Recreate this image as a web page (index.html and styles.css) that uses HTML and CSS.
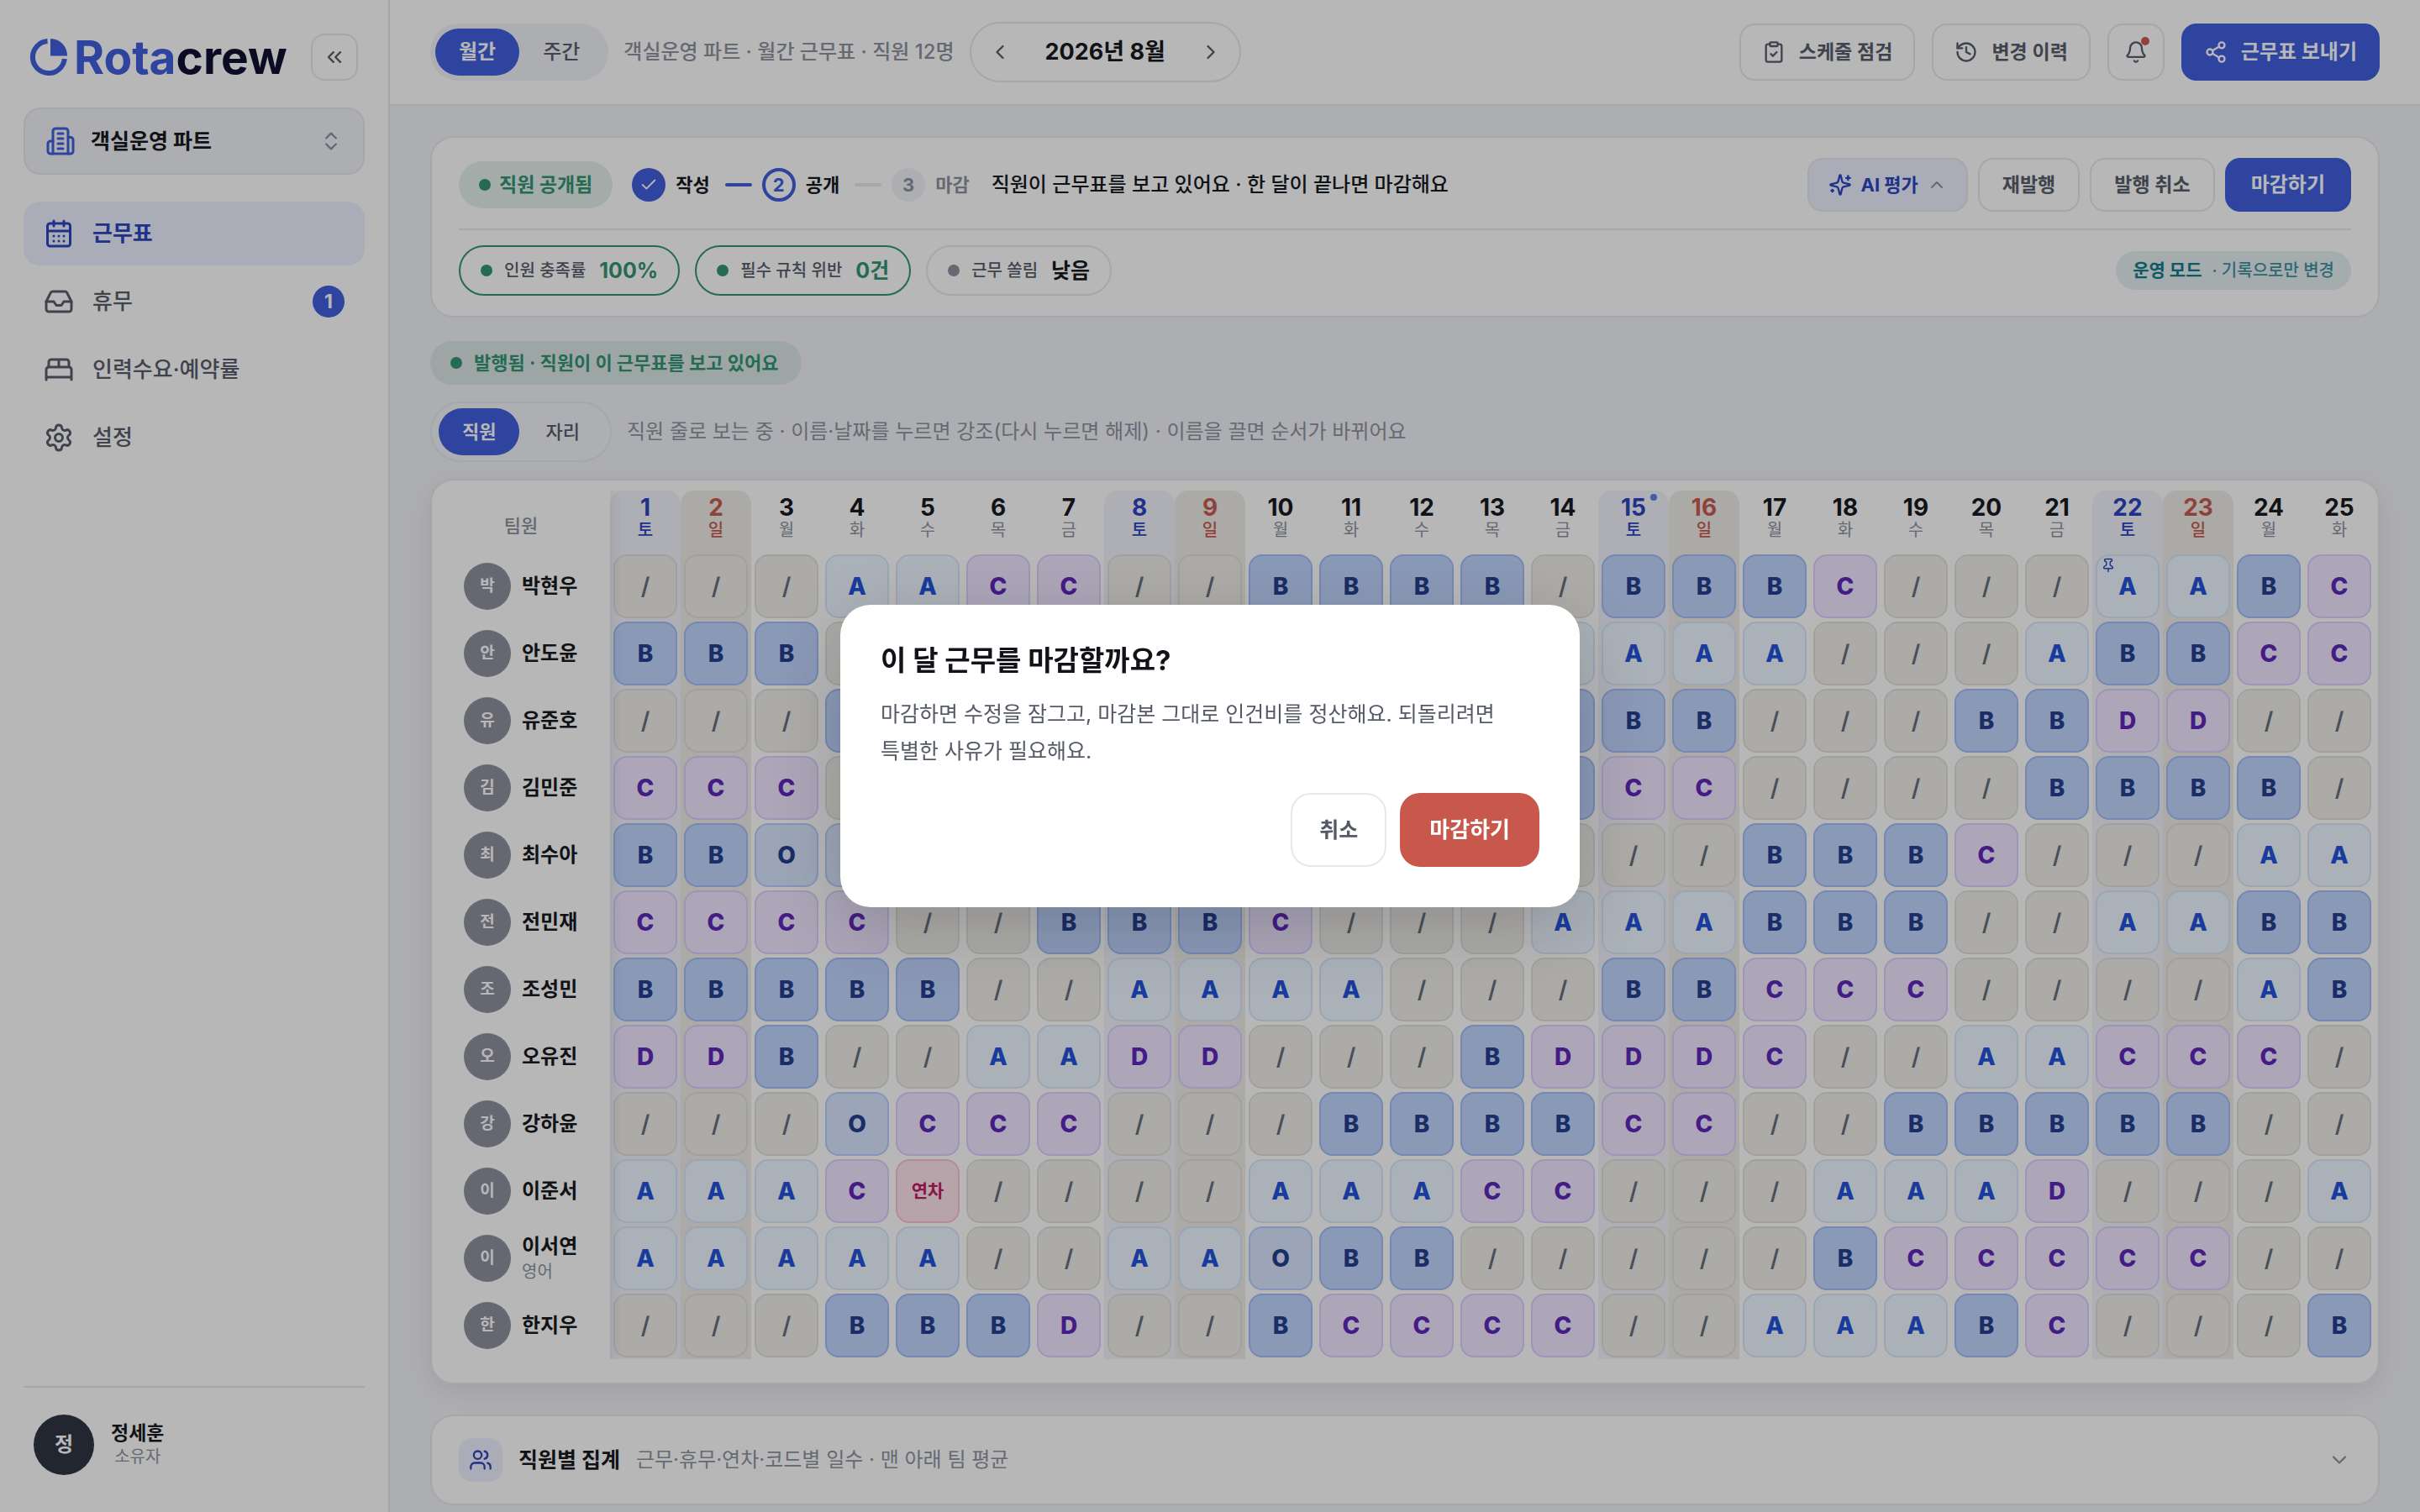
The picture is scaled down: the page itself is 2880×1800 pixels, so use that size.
FILE: index.html
```html
<!DOCTYPE html>
<html lang="ko">
<head>
<meta charset="utf-8">
<title>Rotacrew</title>
<link rel="stylesheet" href="styles.css">
</head>
<body>
<svg class="sprite" aria-hidden="true">
  <symbol id="i-collapse" viewBox="0 0 24 24"><path d="m11 17-5-5 5-5M18 17l-5-5 5-5"/></symbol>
  <symbol id="i-building" viewBox="0 0 24 24"><path d="M6 22V4a2 2 0 0 1 2-2h8a2 2 0 0 1 2 2v18Z"/><path d="M6 12H4a2 2 0 0 0-2 2v6a2 2 0 0 0 2 2h2M18 9h2a2 2 0 0 1 2 2v9a2 2 0 0 1-2 2h-2M10 6h4M10 10h4M10 14h4M10 18h4"/></symbol>
  <symbol id="i-updown" viewBox="0 0 24 24"><path d="m7 15 5 5 5-5M7 9l5-5 5 5"/></symbol>
  <symbol id="i-calendar" viewBox="0 0 24 24"><path d="M8 2v4M16 2v4M3 10h18"/><rect x="3" y="4" width="18" height="18" rx="2"/><path d="M8 14h.01M12 14h.01M16 14h.01M8 18h.01M12 18h.01M16 18h.01"/></symbol>
  <symbol id="i-inbox" viewBox="0 0 24 24"><path d="M22 12h-6l-2 3h-4l-2-3H2"/><path d="M5.45 5.11 2 12v6a2 2 0 0 0 2 2h16a2 2 0 0 0 2-2v-6l-3.45-6.89A2 2 0 0 0 16.76 4H7.24a2 2 0 0 0-1.79 1.11z"/></symbol>
  <symbol id="i-bed" viewBox="0 0 24 24"><path d="M2 20v-8a2 2 0 0 1 2-2h16a2 2 0 0 1 2 2v8M4 10V6a2 2 0 0 1 2-2h12a2 2 0 0 1 2 2v4M12 4v6M2 18h20"/></symbol>
  <symbol id="i-gear" viewBox="0 0 24 24"><path d="M9.671 4.136a2.34 2.34 0 0 1 4.659 0 2.34 2.34 0 0 0 3.319 1.915 2.34 2.34 0 0 1 2.33 4.033 2.34 2.34 0 0 0 0 3.831 2.34 2.34 0 0 1-2.33 4.033 2.34 2.34 0 0 0-3.319 1.915 2.34 2.34 0 0 1-4.659 0 2.34 2.34 0 0 0-3.32-1.915 2.34 2.34 0 0 1-2.33-4.033 2.34 2.34 0 0 0 0-3.831A2.34 2.34 0 0 1 6.35 6.051a2.34 2.34 0 0 0 3.319-1.915"/><circle cx="12" cy="12" r="3"/></symbol>
  <symbol id="i-left" viewBox="0 0 24 24"><path d="m15 18-6-6 6-6"/></symbol>
  <symbol id="i-right" viewBox="0 0 24 24"><path d="m9 18 6-6-6-6"/></symbol>
  <symbol id="i-up" viewBox="0 0 24 24"><path d="m18 15-6-6-6 6"/></symbol>
  <symbol id="i-down" viewBox="0 0 24 24"><path d="m6 9 6 6 6-6"/></symbol>
  <symbol id="i-check" viewBox="0 0 24 24"><path d="M20 6 9 17l-5-5"/></symbol>
  <symbol id="i-clipboard" viewBox="0 0 24 24"><rect x="8" y="2" width="8" height="4" rx="1"/><path d="M16 4h2a2 2 0 0 1 2 2v14a2 2 0 0 1-2 2H6a2 2 0 0 1-2-2V6a2 2 0 0 1 2-2h2M9 14l2 2 4-4"/></symbol>
  <symbol id="i-history" viewBox="0 0 24 24"><path d="M3 12a9 9 0 1 0 9-9 9.75 9.75 0 0 0-6.74 2.74L3 8"/><path d="M3 3v5h5M12 7v5l4 2"/></symbol>
  <symbol id="i-bell" viewBox="0 0 24 24"><path d="M10.268 21a2 2 0 0 0 3.464 0M3.262 15.326A1 1 0 0 0 4 17h16a1 1 0 0 0 .74-1.673C19.41 13.956 18 12.499 18 8A6 6 0 0 0 6 8c0 4.499-1.411 5.956-2.738 7.326"/></symbol>
  <symbol id="i-share" viewBox="0 0 24 24"><circle cx="18" cy="5" r="3"/><circle cx="6" cy="12" r="3"/><circle cx="18" cy="19" r="3"/><path d="m8.59 13.51 6.83 3.98M15.41 6.51l-6.82 3.98"/></symbol>
  <symbol id="i-spark" viewBox="0 0 24 24"><path d="M9.937 15.5A2 2 0 0 0 8.5 14.063l-6.135-1.582a.5.5 0 0 1 0-.962L8.5 9.936A2 2 0 0 0 9.937 8.5l1.582-6.135a.5.5 0 0 1 .963 0L14.063 8.5A2 2 0 0 0 15.5 9.937l6.135 1.581a.5.5 0 0 1 0 .964L15.5 14.063a2 2 0 0 0-1.437 1.437l-1.582 6.135a.5.5 0 0 1-.963 0zM20 3v4M22 5h-4M4 17v2M5 18H3"/></symbol>
  <symbol id="i-users" viewBox="0 0 24 24"><path d="M16 21v-2a4 4 0 0 0-4-4H6a4 4 0 0 0-4 4v2"/><circle cx="9" cy="7" r="4"/><path d="M22 21v-2a4 4 0 0 0-3-3.87M16 3.13a4 4 0 0 1 0 7.75"/></symbol>
  <symbol id="i-pin" viewBox="0 0 24 24"><path d="M12 17v5M9 10.76a2 2 0 0 1-1.11 1.79l-1.78.9A2 2 0 0 0 5 15.24V16a1 1 0 0 0 1 1h12a1 1 0 0 0 1-1v-.76a2 2 0 0 0-1.11-1.79l-1.78-.9A2 2 0 0 1 15 10.76V7a1 1 0 0 1 1-1 2 2 0 0 0 0-4H8a2 2 0 0 0 0 4 1 1 0 0 1 1 1z"/></symbol>
</svg>

<div class="app">
  <aside class="sidebar">
    <div class="brand">
      <svg class="brand-mark" viewBox="0 0 44 44" aria-hidden="true"><path class="ring" d="M20.500 3.060A19 19 0 1 0 40.820 24"/><path class="wedge" d="M24 0A20 20 0 0 1 44 20.500H24Z"/></svg>
      <span class="brand-name"><span class="brand-accent">Rota</span>crew</span>
      <button class="collapse" aria-label="사이드바 접기"><svg class="icon"><use href="#i-collapse"/></svg></button>
    </div>
    <button class="team-select">
      <svg class="icon lg"><use href="#i-building"/></svg><span>객실운영 파트</span><svg class="icon updown"><use href="#i-updown"/></svg>
    </button>
    <nav class="nav">
      <a href="#" class="active"><svg class="icon lg"><use href="#i-calendar"/></svg><span>근무표</span></a>
      <a href="#"><svg class="icon lg"><use href="#i-inbox"/></svg><span>휴무</span><b class="count">1</b></a>
      <a href="#"><svg class="icon lg"><use href="#i-bed"/></svg><span>인력수요·예약률</span></a>
      <a href="#"><svg class="icon lg"><use href="#i-gear"/></svg><span>설정</span></a>
    </nav>
    <div class="user">
      <span class="user-avatar">정</span>
      <div class="user-text"><strong>정세훈</strong><small>소유자</small></div>
    </div>
  </aside>

  <div class="page">
    <header class="topbar">
      <div class="segment"><button class="on">월간</button><button>주간</button></div>
      <span class="crumb">객실운영 파트 · 월간 근무표 · 직원 12명</span>
      <div class="month">
        <button aria-label="이전 달"><svg class="icon"><use href="#i-left"/></svg></button>
        <strong>2026년 8월</strong>
        <button aria-label="다음 달"><svg class="icon"><use href="#i-right"/></svg></button>
      </div>
      <div class="top-actions">
        <button class="btn"><svg class="icon"><use href="#i-clipboard"/></svg>스케줄 점검</button>
        <button class="btn"><svg class="icon"><use href="#i-history"/></svg>변경 이력</button>
        <button class="btn square" aria-label="알림"><svg class="icon"><use href="#i-bell"/></svg><i class="alert"></i></button>
        <button class="btn primary"><svg class="icon"><use href="#i-share"/></svg>근무표 보내기</button>
      </div>
    </header>

    <main class="content">
      <section class="card status">
        <div class="status-row">
          <span class="chip"><i class="dot"></i>직원 공개됨</span>
          <ol class="steps">
            <li class="done"><span class="step-no"><svg class="icon"><use href="#i-check"/></svg></span>작성</li>
            <li class="bar"></li>
            <li class="now"><span class="step-no">2</span>공개</li>
            <li class="bar off"></li>
            <li class="todo"><span class="step-no">3</span>마감</li>
          </ol>
          <span class="status-text">직원이 근무표를 보고 있어요 · 한 달이 끝나면 마감해요</span>
          <div class="status-actions">
            <button class="btn ai"><svg class="icon"><use href="#i-spark"/></svg>AI 평가<svg class="icon caret"><use href="#i-up"/></svg></button>
            <button class="btn">재발행</button>
            <button class="btn">발행 취소</button>
            <button class="btn primary">마감하기</button>
          </div>
        </div>
        <div class="status-row metrics">
          <span class="metric good"><i class="dot"></i>인원 충족률<b>100%</b></span>
          <span class="metric good"><i class="dot"></i>필수 규칙 위반<b>0건</b></span>
          <span class="metric"><i class="dot"></i>근무 쏠림<b>낮음</b></span>
          <span class="mode"><b>운영 모드</b><span>· 기록으로만 변경</span></span>
        </div>
      </section>

      <p class="published"><i class="dot"></i>발행됨 · 직원이 이 근무표를 보고 있어요</p>

      <div class="view-row">
        <div class="segment outlined"><button class="on">직원</button><button>자리</button></div>
        <span class="hint">직원 줄로 보는 중 · 이름·날짜를 누르면 강조(다시 누르면 해제) · 이름을 끌면 순서가 바뀌어요</span>
      </div>

      <section class="card roster">
        <table>
          <colgroup><col class="col-name"><col span="25"></colgroup>
          <thead><tr id="days"><th class="corner">팀원</th></tr></thead>
          <tbody id="rows"></tbody>
        </table>
      </section>

      <section class="card summary">
        <span class="summary-icon"><svg class="icon"><use href="#i-users"/></svg></span>
        <h2>직원별 집계</h2>
        <span class="summary-note">근무·휴무·연차·코드별 일수 · 맨 아래 팀 평균</span>
        <svg class="icon"><use href="#i-down"/></svg>
      </section>
    </main>
  </div>
</div>

<div class="backdrop">
  <div class="modal" role="dialog" aria-modal="true" aria-labelledby="modal-title">
    <h1 id="modal-title">이 달 근무를 마감할까요?</h1>
    <p>마감하면 수정을 잠그고, 마감본 그대로 인건비를 정산해요. 되돌리려면 특별한 사유가 필요해요.</p>
    <div class="modal-actions">
      <button class="cancel">취소</button>
      <button class="danger">마감하기</button>
    </div>
  </div>
</div>
<script src="roster.js"></script>
</body>
</html>
```
FILE: styles.css
```css
:root {
  --ink: #111318;
  --body: #545a66;
  --muted: #8b909b;
  --line: #e7e8eb;
  --page: #f1f2f5;
  --blue: #3b5bdb;
  --blue-deep: #2740bd;
  --green: #2f926f;
  --red: #c8574c;
}

* { box-sizing: border-box; }

body {
  margin: 0;
  background: var(--page);
  color: var(--ink);
  font-family: Inter, "Noto Sans CJK KR", sans-serif;
  font-size: 24px;
  line-height: 32px;
}

button { font: inherit; color: inherit; background: none; border: 0; padding: 0; margin: 0; }
a { color: inherit; text-decoration: none; }
h1, h2, p, ol { margin: 0; padding: 0; }

.sprite { position: absolute; width: 0; height: 0; }
.icon {
  width: 28px;
  height: 28px;
  flex: none;
  fill: none;
  stroke: currentColor;
  stroke-width: 2;
  stroke-linecap: round;
  stroke-linejoin: round;
}
.icon.lg { width: 36px; height: 36px; }

.app { display: flex; height: 100vh; overflow: hidden; }

/* Sidebar */
.sidebar {
  flex: none;
  width: 464px;
  padding: 40px 28px 44px;
  border-right: 2px solid var(--line);
  background: #fff;
  display: flex;
  flex-direction: column;
}
.brand { display: flex; align-items: center; gap: 8px; padding: 0 8px; height: 56px; }
.brand-mark { width: 44px; height: 44px; }
.brand-mark .ring { fill: none; stroke: var(--blue); stroke-width: 6; }
.brand-mark .wedge { fill: var(--blue); }
.brand-name { font-weight: 700; font-size: 55px; line-height: 56px; color: #0a0a2c; }
.brand-accent { color: var(--blue); }
.collapse {
  margin-left: auto;
  width: 56px;
  height: 56px;
  border: 2px solid var(--line);
  border-radius: 16px;
  color: var(--body);
  display: grid;
  place-items: center;
}
.team-select {
  margin-top: 32px;
  height: 80px;
  padding: 0 24px;
  border: 2px solid var(--line);
  border-radius: 20px;
  background: var(--page);
  display: flex;
  align-items: center;
  gap: 18px;
  font-size: 25px;
  font-weight: 700;
}
.team-select .icon.lg { color: var(--blue); }
.team-select .updown { margin-left: auto; color: var(--muted); }
.nav { margin-top: 32px; display: flex; flex-direction: column; gap: 5px; }
.nav a {
  height: 76px;
  padding: 0 24px;
  border-radius: 20px;
  display: flex;
  align-items: center;
  gap: 22px;
  font-size: 26px;
  font-weight: 500;
  color: var(--body);
}
.nav a.active { background: #ecefff; color: var(--blue-deep); font-weight: 700; }
.count {
  margin-left: auto;
  width: 38px;
  height: 38px;
  border-radius: 50%;
  background: var(--blue);
  color: #fff;
  font-size: 23px;
  line-height: 38px;
  text-align: center;
}
.user { margin-top: auto; padding: 32px 12px 0; border-top: 2px solid var(--line); display: flex; align-items: center; gap: 20px; }
.user-avatar { width: 72px; height: 72px; border-radius: 50%; background: #2a303d; color: #fff; font-size: 24px; font-weight: 700; line-height: 72px; text-align: center; }
.user-text { display: flex; flex-direction: column; align-items: center; }
.user-text strong { font-size: 23px; line-height: 28px; }
.user-text small { font-size: 20px; line-height: 28px; color: var(--muted); }

/* Top bar */
.page { flex: 1; min-width: 0; display: flex; flex-direction: column; }
.topbar {
  flex: none;
  height: 126px;
  padding: 0 48px;
  border-bottom: 2px solid var(--line);
  background: #fff;
  display: flex;
  align-items: center;
  gap: 18px;
}
.segment { display: flex; padding: 6px; border-radius: 34px; background: var(--page); }
.segment button { height: 56px; padding: 0 28px; border-radius: 28px; font-weight: 500; color: var(--body); font-size: 24px; }
.segment button.on { background: var(--blue); color: #fff; font-weight: 700; }
.crumb { color: var(--muted); font-weight: 500; }
.month {
  height: 72px;
  padding: 0 20px;
  border: 2px solid var(--line);
  border-radius: 36px;
  display: flex;
  align-items: center;
  gap: 40px;
  color: var(--body);
}
.month button { display: flex; }
.month strong { font-size: 27px; color: var(--ink); }
.top-actions { margin-left: auto; display: flex; gap: 20px; }
.btn {
  position: relative;
  height: 68px;
  padding: 0 25px;
  border: 2px solid var(--line);
  border-radius: 18px;
  background: #fff;
  color: var(--body);
  display: flex;
  align-items: center;
  justify-content: center;
  gap: 16px;
  font-size: 23px;
  font-weight: 600;
  white-space: nowrap;
}
.btn.primary { background: var(--blue); border-color: var(--blue); color: #fff; font-weight: 700; font-size: 24px; }
.btn.square { width: 68px; padding: 0; }
.alert { position: absolute; top: 14px; right: 16px; width: 10px; height: 10px; border-radius: 50%; background: var(--red); }

/* Content */
.content { padding: 36px 48px 0; display: flex; flex-direction: column; }
.card { border: 2px solid var(--line); border-radius: 28px; background: #fff; }
.dot { width: 14px; height: 14px; flex: none; border-radius: 50%; background: currentColor; }

.status { padding: 24px 32px; }
.status-row { display: flex; align-items: center; height: 64px; }
.chip {
  height: 56px;
  padding: 0 24px;
  border-radius: 28px;
  background: #e4efeb;
  color: var(--green);
  display: flex;
  align-items: center;
  gap: 10px;
  font-size: 23px;
  font-weight: 700;
}
.steps { margin-left: 23px; list-style: none; display: flex; align-items: center; font-size: 22px; font-weight: 600; }
.steps li { display: flex; align-items: center; gap: 12px; }
.step-no { width: 40px; height: 40px; border-radius: 50%; background: var(--page); display: grid; place-items: center; font-weight: 700; }
.steps .icon { width: 22px; height: 22px; }
.done .step-no { background: var(--blue); color: #fff; }
.now .step-no { border: 4px solid var(--blue); background: #fff; color: var(--blue); }
.todo { color: var(--muted); }
.steps .bar { width: 32px; height: 4px; margin: 0 12px 0 18px; border-radius: 2px; background: var(--blue); }
.steps .bar.off { background: var(--line); }
.status-text { margin-left: 26px; font-weight: 500; }
.status-actions { margin-left: auto; display: flex; gap: 12px; }
.status-actions .btn { height: 64px; padding: 0 27px; }
.status-actions .btn.primary { padding: 0 29px; }
.status-actions .btn.ai { background: #ecefff; color: var(--blue-deep); font-weight: 700; font-size: 22px; gap: 10px; padding: 0 23px; }
.btn.ai .caret { width: 24px; height: 24px; color: var(--muted); }
.metrics { margin-top: 20px; padding-top: 18px; border-top: 2px solid var(--line); height: 80px; gap: 18px; }
.metric {
  height: 60px;
  padding: 0 24px;
  border: 2px solid var(--line);
  border-radius: 30px;
  display: flex;
  align-items: center;
  gap: 14px;
  font-size: 20px;
  color: var(--body);
  font-weight: 500;
}
.metric b { margin-left: 2px; font-size: 25px; color: var(--ink); }
.metric .dot { background: var(--muted); }
.metric.good { border-color: var(--green); }
.metric.good b { color: var(--green); }
.metric.good .dot { background: var(--green); }
.mode { margin-left: auto; height: 46px; padding: 0 20px; border-radius: 23px; background: #e4eff1; color: #0e7986; display: flex; align-items: center; gap: 12px; font-size: 20px; }
.mode b { font-size: 21px; }
.mode span { opacity: .8; font-weight: 500; }

.published {
  align-self: flex-start;
  margin-top: 28px;
  height: 52px;
  padding: 0 28px 0 24px;
  border-radius: 26px;
  background: #dae7e4;
  color: var(--green);
  display: flex;
  align-items: center;
  gap: 14px;
  font-size: 22px;
  font-weight: 700;
}
.view-row { margin-top: 20px; display: flex; align-items: center; gap: 18px; }
.segment.outlined { border: 2px solid var(--line); border-radius: 36px; background: #f3f4f6; padding: 6px 8px; gap: 3px; }
.segment.outlined button { font-size: 22px; }
.hint { color: var(--muted); }

/* Roster */
.roster { margin-top: 20px; padding: 12px 4px 28px 0; overflow: hidden; box-shadow: 0 8px 32px rgba(17, 19, 24, .08); }
.roster table { width: 100%; table-layout: fixed; border-collapse: separate; border-spacing: 0; }
.col-name { width: 212px; }
.roster th, .roster td { padding: 2px 4px; vertical-align: middle; }
.roster thead th { height: 74px; vertical-align: top; padding: 6px 0 0; text-align: center; font-weight: 400; }
.roster thead th.corner { vertical-align: middle; padding-top: 10px; font-size: 22px; color: var(--muted); font-weight: 500; }
.roster th:first-child { position: relative; }
.roster th:first-child::after {
  content: "";
  position: absolute;
  z-index: 1;
  top: 0;
  bottom: 0;
  left: 100%;
  width: 14px;
  background: linear-gradient(90deg, rgba(17, 19, 24, .05), rgba(17, 19, 24, 0));
  pointer-events: none;
}
.day { position: relative; }
.day b { display: block; font-size: 28px; line-height: 28px; }
.day span { display: block; font-size: 20px; line-height: 26px; color: var(--muted); }
.roster .sat { background: #f1f4fb; }
.roster .sun { background: #efede6; }
.roster thead .sat, .roster thead .sun { border-radius: 16px 16px 0 0; }
.sat b, .sat span { color: var(--blue-deep); }
.sun b, .sun span { color: var(--red); }
.sat span, .sun span { font-weight: 500; }
.holiday::after { content: ""; position: absolute; top: 4px; right: 14px; width: 8px; height: 8px; border-radius: 50%; background: var(--blue); opacity: .8; }
.person { display: flex; align-items: center; gap: 13px; padding-left: 34px; height: 76px; text-align: left; }
.face { width: 56px; height: 56px; border-radius: 50%; background: #8a8f9a; color: #fff; font-size: 19px; line-height: 56px; text-align: center; font-weight: 600; }
.person div { display: flex; flex-direction: column; }
.person strong { font-size: 24px; line-height: 32px; font-weight: 600; }
.person small { font-size: 20px; line-height: 28px; color: var(--muted); font-weight: 400; }
.shift {
  position: relative;
  display: block;
  width: 100%;
  height: 76px;
  border: 2px solid #e0dfd8;
  border-radius: 16px;
  background: #efeee8;
  color: #646b7a;
  font-size: 28px;
  font-weight: 800;
  text-align: center;
}
.shift.rest { font-weight: 600; }
.shift.a { background: #edf7ff; border-color: #d6e5fa; color: #1d4ed8; }
.shift.b { background: #bfd4fd; border-color: #9fbcf5; color: #1e3a8a; }
.shift.c { background: #efe7ff; border-color: #dccdfb; color: #5b21b6; }
.shift.o { background: #d9e6fe; border-color: #b6cdf9; color: #1e3a8a; }
.shift.leave { background: #ffe4ec; border-color: #f8c2d1; color: #be185d; font-size: 21px; font-weight: 700; }
.pin { position: absolute; top: 2px; left: 4px; width: 18px; height: 18px; color: var(--blue-deep); }

/* Summary */
.summary { margin-top: 36px; padding: 26px 32px; display: flex; align-items: center; gap: 19px; }
.summary-icon { width: 52px; height: 52px; border-radius: 16px; background: #ecefff; color: var(--blue-deep); display: grid; place-items: center; }
.summary h2 { font-size: 25px; line-height: 32px; }
.summary-note { color: var(--muted); }
.summary > .icon { margin-left: auto; color: var(--muted); }

/* Dialog */
.backdrop { position: fixed; inset: 0; background: rgba(15, 17, 21, .3); display: flex; align-items: center; justify-content: center; }
.modal { width: 880px; padding: 48px; border-radius: 36px; background: #fff; box-shadow: 0 24px 80px rgba(17, 19, 24, .18); }
.modal h1 { font-size: 33px; line-height: 36px; font-weight: 700; }
.modal p { margin-top: 24px; font-size: 25px; line-height: 44px; color: var(--body); word-break: keep-all; }
.modal-actions { margin-top: 28px; display: flex; justify-content: flex-end; gap: 16px; }
.modal-actions button { height: 88px; border-radius: 24px; font-size: 25px; }
.cancel { padding: 0 32px; border: 2px solid var(--line); color: var(--body); font-weight: 600; }
.modal-actions .danger { padding: 0 35px; background: var(--red); color: #fff; font-weight: 700; font-size: 26px; }
```
FILE: roster.js
```js
const weekdays = ['토', '일', '월', '화', '수', '목', '금'];
const staff = [
  ['박현우', '', '///AACC//BBBB/BBBC///AABC'],
  ['안도윤', '', 'BBB///AAABB//AAAA///ABBCC'],
  ['유준호', '', '///BBBB///AABBBB///BBDD//'],
  ['김민준', '', 'CCC///BBBB///BCC////BBBB/'],
  ['최수아', '', 'BBOO//AAAA//////BBBC///AA'],
  ['전민재', '', 'CCCC//BBBC///AAABBB//AABB'],
  ['조성민', '', 'BBBBB//AAAA///BBCCC////AB'],
  ['오유진', '', 'DDB//AADD///BDDDC//AACCC/'],
  ['강하윤', '', '///OCCC///BBBBCC//BBBBB//'],
  ['이준서', '', 'AAACL////AAACC///AAAD///A'],
  ['이서연', '영어', 'AAAAA//AAOBB/////BCCCCC//'],
  ['한지우', '', '///BBBD//BCCCC//AAABC///B']
];
const styles = { '/': 'rest', A: 'a', B: 'b', C: 'c', D: 'c', O: 'o', L: 'leave' };

const weekend = i => (i % 7 === 0 ? 'sat' : i % 7 === 1 ? 'sun' : '');

let head = '';
for (let i = 0; i < 25; i++) {
  head += `<th class="day ${weekend(i)}${i === 14 ? ' holiday' : ''}"><b>${i + 1}</b><span>${weekdays[i % 7]}</span></th>`;
}
document.getElementById('days').insertAdjacentHTML('beforeend', head);

document.getElementById('rows').innerHTML = staff.map(([name, note, codes], r) => {
  const cells = [...codes].map((code, i) => {
    const pin = r === 0 && i === 21 ? '<svg class="icon pin"><use href="#i-pin"/></svg>' : '';
    return `<td class="${weekend(i)}"><button class="shift ${styles[code]}">${pin}${code === 'L' ? '연차' : code}</button></td>`;
  }).join('');
  return `<tr><th><div class="person"><span class="face">${name[0]}</span><div><strong>${name}</strong>${note ? `<small>${note}</small>` : ''}</div></div></th>${cells}</tr>`;
}).join('');
```
